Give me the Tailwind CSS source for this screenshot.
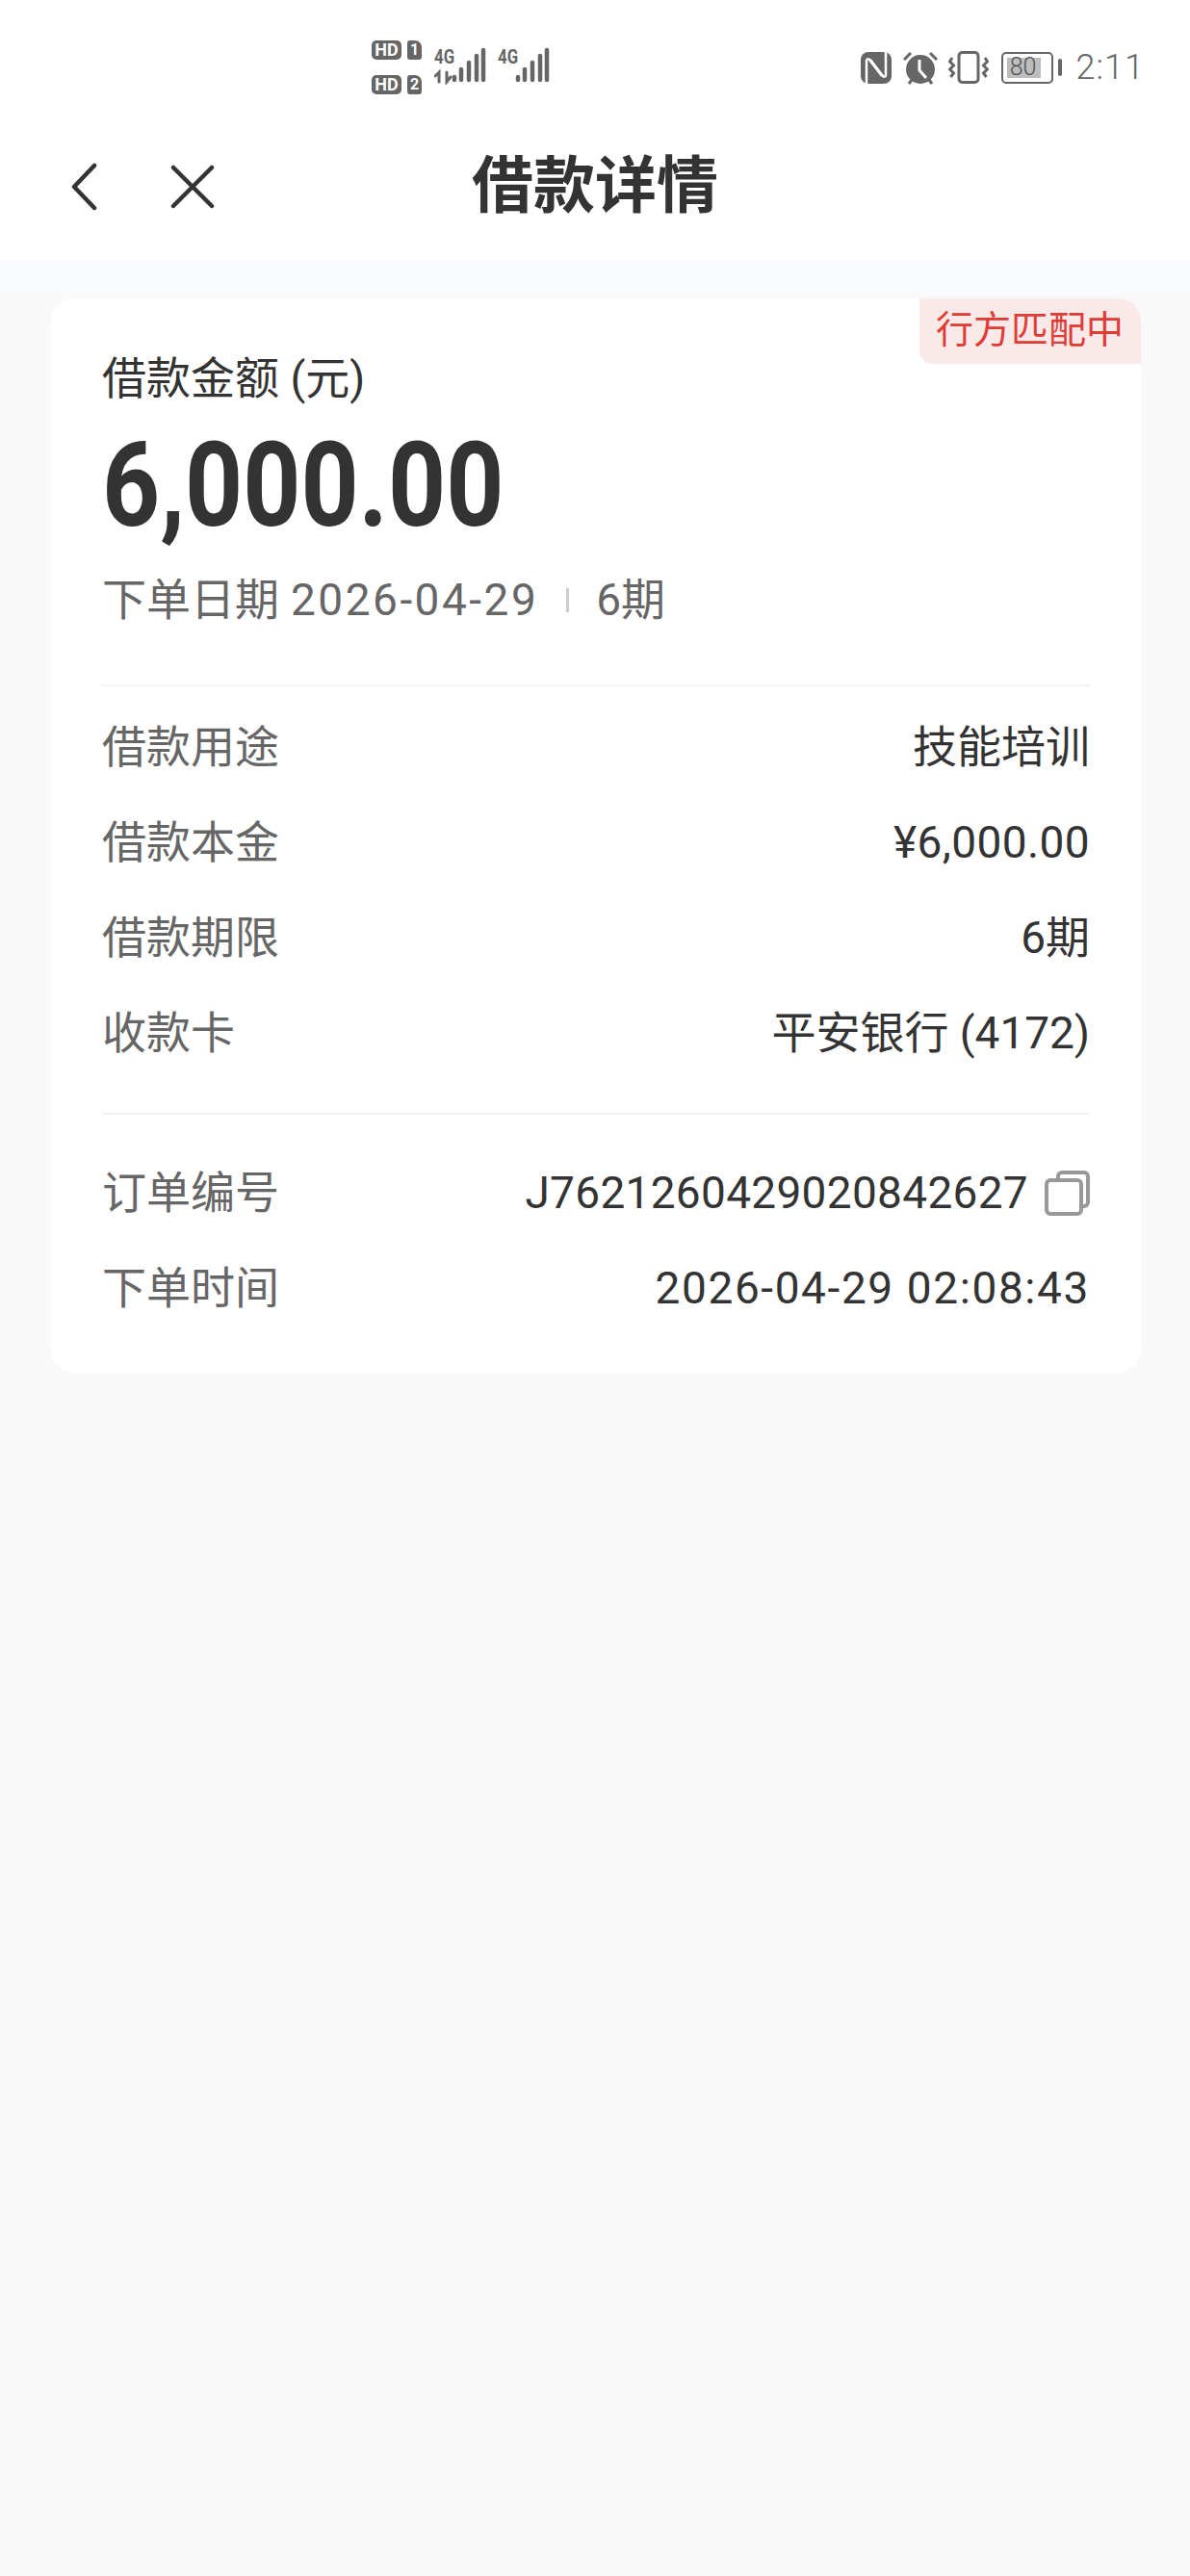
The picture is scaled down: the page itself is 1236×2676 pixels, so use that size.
<!DOCTYPE html>
<html lang="zh-CN">
<head>
    <meta charset="UTF-8">
    <meta name="viewport" content="width=device-width, initial-scale=1.0">
    <title>借款详情</title>
    <script src="https://cdn.jsdelivr.net/npm/@tailwindcss/browser@4"></script>
</head>
<body class="bg-[#f9f9f9] font-['Roboto','Noto_Sans_CJK_SC',sans-serif] text-[#333] min-h-screen">
    <header class="bg-white h-[270px]">
        <!-- 状态栏 -->
        <div class="h-[118px] flex pl-[386px] pr-[50px] pt-[42px] text-[#666]">
            <div class="flex flex-col gap-[16px] w-[52px]">
                <div class="flex gap-[6px]">
                    <span class="w-[31px] h-[20px] rounded-[5px] bg-[#666] text-white text-[18px] leading-[20px] font-bold text-center">HD</span>
                    <span class="w-[15px] h-[20px] rounded-[3px] rounded-tr-[7px] bg-[#666] text-white text-[16px] leading-[20px] font-bold text-center">1</span>
                </div>
                <div class="flex gap-[6px]">
                    <span class="w-[31px] h-[20px] rounded-[5px] bg-[#666] text-white text-[18px] leading-[20px] font-bold text-center">HD</span>
                    <span class="w-[15px] h-[20px] rounded-[3px] rounded-tr-[7px] bg-[#666] text-white text-[16px] leading-[20px] font-bold text-center">2</span>
                </div>
            </div>
            <div class="relative w-[58px] ml-[13px] h-[46px]">
                <span class="absolute left-0 top-[7px] text-[21px] leading-[20px] font-bold scale-x-[0.8] origin-left">4G</span>
                <svg class="absolute left-0 top-0" width="58" height="46" viewBox="0 0 58 46" fill="none" stroke="#666" stroke-linecap="round">
                    <path d="M21 41V38M28 41V30M36 41V23M44 41V16M51 41V10" stroke-width="4.5"/>
                    <path d="M5 43V33M1 37L5 33L5 38M13 33V43L17 38" stroke-width="3"/>
                </svg>
            </div>
            <div class="relative w-[58px] ml-[8px] h-[46px]">
                <span class="absolute left-0 top-[7px] text-[21px] leading-[20px] font-bold scale-x-[0.8] origin-left">4G</span>
                <svg class="absolute left-0 top-0" width="58" height="46" viewBox="0 0 58 46" fill="none" stroke="#666" stroke-linecap="round">
                    <path d="M21 41V38M28 41V30M36 41V23M44 41V16M51 41V10" stroke-width="4.5"/>
                </svg>
            </div>
            <div class="ml-auto flex items-center h-[56px] mr-[-3px]">
                <!-- NFC -->
                <svg width="32" height="33" viewBox="0 0 32 33">
                    <rect width="32" height="33" rx="8" fill="#666"/>
                    <path d="M6 33V9c0-2 2-2 3-1l13 17M26 0V24c0 2-2 2-3 1L10 8" fill="none" stroke="#fff" stroke-width="2.5"/>
                </svg>
                <!-- 闹钟 -->
                <svg class="ml-[12px]" width="36" height="35" viewBox="0 0 36 35">
                    <circle cx="18" cy="19" r="15" fill="#666"/>
                    <path d="M1 9L8 2M35 9L28 2M9 30L6 34M27 30L30 34" fill="none" stroke="#666" stroke-width="3"/>
                    <path d="M17 9V20L24 28" fill="none" stroke="#fff" stroke-width="3"/>
                </svg>
                <!-- 振动 -->
                <svg class="ml-[11px]" width="42" height="34" viewBox="0 0 42 34" fill="none" stroke="#666">
                    <rect x="11" y="1.5" width="20" height="31" rx="3.5" stroke-width="3"/>
                    <path d="M4 7L1.5 11L5.5 15L1.5 19L5.5 23L2.5 27M38 7L40.5 11L36.5 15L40.5 19L36.5 23L39.5 27" stroke-width="3"/>
                </svg>
                <!-- 电量 -->
                <div class="relative ml-[13px] w-[54px] h-[33px] border-[2.5px] border-[#666] rounded-[5px]">
                    <div class="absolute left-[4px] top-[4px] bottom-[4px] w-[35px] bg-[#bdbdbd]"></div>
                    <span class="absolute left-[2px] w-[38px] top-0 bottom-0 text-center text-[25px] leading-[28px] font-light text-[#555]">80</span>
                </div>
                <div class="ml-[5px] w-[4px] h-[18px] rounded-sm bg-[#666]"></div>
                <span class="ml-[15px] text-[36px] leading-[40px] font-light tracking-[1px] text-[#666]">2:11</span>
            </div>
        </div>
        <!-- 导航 -->
        <nav class="h-[152px] grid grid-cols-[1fr_auto_1fr] items-center">
            <div class="flex items-center pl-[72px] gap-[75px]">
                <svg width="30" height="50" viewBox="0 0 30 50" fill="none" stroke="#333" stroke-width="4.5" stroke-linecap="round" stroke-linejoin="round">
                    <path d="M26 3L5 25L26 47"/>
                </svg>
                <svg width="46" height="46" viewBox="0 0 46 46" fill="none" stroke="#333" stroke-width="4.5" stroke-linecap="round">
                    <path d="M3 3L43 43M43 3L3 43"/>
                </svg>
            </div>
            <h1 class="text-[64px] leading-[70px] font-bold text-[#333]">借款详情</h1>
            <div></div>
        </nav>
    </header>

    <div class="h-[36px] bg-[#f9fafc]"></div>

    <main class="pl-[53px] pr-[51px] pt-[4px]">
        <section class="relative bg-white rounded-[24px] h-[1116px] pl-[53px] pr-[53px] pt-[54px] overflow-hidden">
            <div class="absolute top-0 right-0 w-[230px] h-[68px] bg-[#fae9e9] rounded-tr-[14px] rounded-bl-[14px] pl-[17px] text-[39px] leading-[66px] text-[#e03c35]">行方匹配中</div>

            <div class="text-[46px] leading-[58px] text-[#333]">借款金额 (元)</div>
            <div class="mt-[13px] text-[122px] leading-[140px] font-bold origin-left scale-x-[0.86] text-[#333] whitespace-nowrap">6,000.00</div>
            <div class="mt-[18px] flex items-center text-[46px] leading-[60px] text-[#666]">
                <span>下单日期</span>
                <span class="ml-[12px] tracking-[2.5px]">2026-04-29</span>
                <span class="ml-[29px] w-[3px] h-[25px] bg-[#ccc]"></span>
                <span class="ml-[28px]">6期</span>
            </div>

            <div class="mt-[58px] border-t-2 border-[#f4f4f4] pt-[33px] flex flex-col gap-[39px] text-[46px] leading-[60px]">
                <div class="flex justify-between"><span class="text-[#666]">借款用途</span><span>技能培训</span></div>
                <div class="flex justify-between"><span class="text-[#666]">借款本金</span><span class="tracking-[0.4px]">¥6,000.00</span></div>
                <div class="flex justify-between"><span class="text-[#666]">借款期限</span><span>6期</span></div>
                <div class="flex justify-between"><span class="text-[#666]">收款卡</span><span>平安银行 (4172)</span></div>
            </div>

            <div class="mt-[53px] border-t-2 border-[#f4f4f4] pt-[51px] flex flex-col gap-[39px] text-[46px] leading-[60px]">
                <div class="flex justify-between items-center">
                    <span class="text-[#666]">订单编号</span>
                    <span class="flex items-center gap-[17px]">
                        <span class="tracking-[0.3px]">J7621260429020842627</span>
                        <svg width="47" height="47" viewBox="0 0 47 47" fill="none" stroke="#999" stroke-width="4">
                            <path d="M14 8V6a4 4 0 0 1 4-4h23a4 4 0 0 1 4 4v27a4 4 0 0 1-4 4h-3"/>
                            <rect x="2" y="10" width="36" height="35" rx="4"/>
                        </svg>
                    </span>
                </div>
                <div class="flex justify-between"><span class="text-[#666]">下单时间</span><span class="tracking-[1.6px]">2026-04-29 02:08:43</span></div>
            </div>
        </section>
    </main>
</body>
</html>
